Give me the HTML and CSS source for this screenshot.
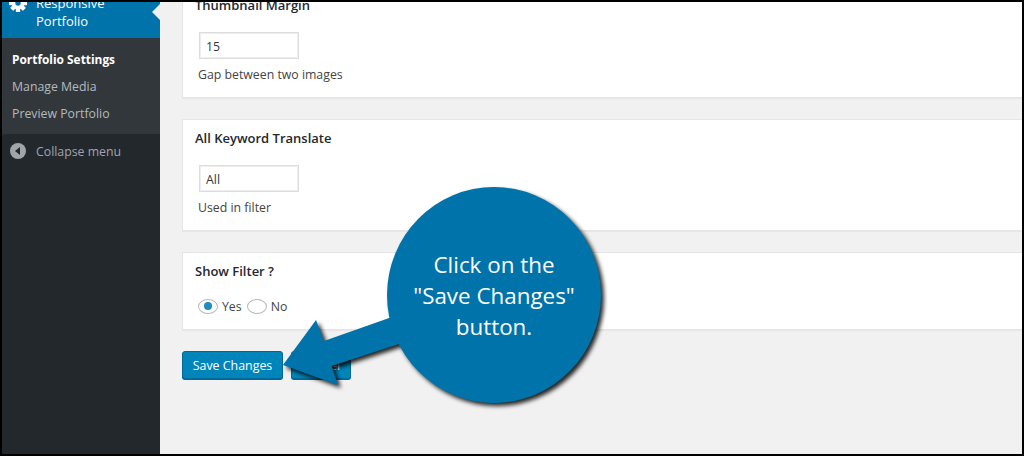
FILE: index.html
```html
<!DOCTYPE html>
<html lang="en">
<head>
  <meta charset="UTF-8">
  <meta name="viewport" content="width=device-width, initial-scale=1">
  <title>Responsive Portfolio</title>
  <link rel="stylesheet" href="styles.css">
</head>
<body>

<div class="frame">
  <aside class="sidebar">
    <div class="menu-current">
      <svg class="gear" viewBox="0 0 20 20">
        <g fill="#fff">
          <rect x="7.6" y="0" width="4.8" height="20" rx="0.6"/>
          <rect x="7.6" y="0" width="4.8" height="20" rx="0.6" transform="rotate(45 10 10)"/>
          <rect x="7.6" y="0" width="4.8" height="20" rx="0.6" transform="rotate(90 10 10)"/>
          <rect x="7.6" y="0" width="4.8" height="20" rx="0.6" transform="rotate(135 10 10)"/>
          <circle cx="10" cy="10" r="7"/>
        </g>
        <circle cx="10" cy="10" r="3" fill="#0073aa"/>
      </svg>
      <span class="menu-label">Responsive Portfolio</span>
      <span class="menu-notch"></span>
    </div>
    <ul class="submenu">
      <li class="active">Portfolio Settings</li>
      <li>Manage Media</li>
      <li>Preview Portfolio</li>
    </ul>
    <div class="collapse">
      <svg class="collapse-icon" viewBox="0 0 16 16">
        <circle cx="8" cy="8" r="8" fill="#a0a5aa"/>
        <path d="M5 8l5-4v8z" fill="#23282d"/>
      </svg>
      <span>Collapse menu</span>
    </div>
  </aside>

  <main class="main">
    <section class="card">
      <h3>Thumbnail Margin</h3>
      <div class="field">15</div>
      <p class="help">Gap between two images</p>
    </section>

    <section class="card">
      <h3>All Keyword Translate</h3>
      <div class="field">All</div>
      <p class="help">Used in filter</p>
    </section>

    <section class="card card-radio">
      <h3>Show Filter ?</h3>
      <div class="radios">
        <span class="radio checked"></span>
        <span class="radio-label">Yes</span>
        <span class="radio"></span>
        <span class="radio-label">No</span>
      </div>
    </section>

    <div class="actions">
      <button class="btn btn-save">Save Changes</button>
      <button class="btn btn-cancel">Cancel</button>
    </div>
  </main>

  <div class="callout">
    <svg class="callout-shape" viewBox="270 180 345 230">
      <path d="M283 365L316 320L324 341L392 317L402 343L331.500 366L338 385Z" fill="#0073aa"/>
      <ellipse cx="494" cy="295" rx="107" ry="108" fill="#0073aa"/>
    </svg>
    <div class="callout-text">Click on the<br>"Save Changes"<br>button.</div>
  </div>
</div>

</body>
</html>
```

FILE: styles.css
```css
html, body {
  margin: 0;
  padding: 0;
  height: 100%;
  background: #f1f1f1;
  font-family: 'Open Sans', 'Noto Sans', sans-serif;
  font-size: 12.3px;
  color: #444;
}
.frame {
  position: relative;
  display: flex;
  box-sizing: border-box;
  height: 456px;
  border: 2px solid #000;
  overflow: hidden;
}

/* left menu */
.sidebar {
  flex: 0 0 158px;
  background: #23282d;
  color: #eee;
}
.menu-current {
  position: relative;
  display: flex;
  gap: 9px;
  height: 52px;
  margin-top: -16px;
  padding: 0 10px 0 7px;
  box-sizing: border-box;
  background: #0073aa;
  color: #fff;
  line-height: 18px;
  font-size: 13px;
}
.gear {
  flex: 0 0 18px;
  height: 18px;
  margin-top: 8px;
}
.menu-label {
  padding-top: 8px;
  width: 90px;
}
.menu-notch {
  position: absolute;
  right: 0;
  top: 18px;
  border: 8px solid transparent;
  border-right-color: #f1f1f1;
}
.submenu {
  list-style: none;
  margin: 0;
  padding: 8px 0 7px;
  background: #32373c;
  color: #b4b9be;
}
.submenu li {
  height: 27px;
  padding-left: 10px;
  line-height: 27px;
}
.submenu li.active {
  color: #fff;
  font-size: 11.9px;
  font-weight: 700;
}
.collapse {
  display: flex;
  align-items: center;
  gap: 10px;
  height: 34px;
  padding-left: 8px;
  color: #a0a5aa;
}
.collapse-icon {
  width: 16px;
  height: 16px;
}

/* settings cards */
.main {
  flex: 1;
  min-width: 0;
  margin-top: -16px;
  padding-left: 22px;
}
.card {
  box-sizing: border-box;
  height: 112px;
  margin-bottom: 21px;
  padding: 9px 12px 0;
  background: #fff;
  border: 1px solid #e5e5e5;
  border-right: 0;
  box-shadow: 0 1px 1px rgba(0,0,0,.04);
}
.card-radio {
  height: 78px;
}
.card h3 {
  margin: 0 0 18px;
  font-size: 13px;
  font-weight: 600;
  line-height: 18px;
  color: #23282d;
}
.field {
  box-sizing: border-box;
  width: 100px;
  height: 27px;
  margin-left: 4px;
  padding-left: 6px;
  border: 1px solid #ddd;
  box-shadow: inset 0 0 0 1px #eee;
  line-height: 27px;
  color: #32373c;
}
.help {
  margin: 7px 0 0 3px;
  line-height: 18px;
}
.radios {
  display: flex;
  align-items: center;
  height: 16px;
  margin: 0 0 0 3px;
}
.radio {
  position: relative;
  box-sizing: border-box;
  width: 20px;
  height: 15px;
  border: 1px solid #b4b9be;
  border-radius: 50%;
  background: #fff;
}
.radio.checked::after {
  content: "";
  position: absolute;
  left: 5px;
  top: 2.500px;
  width: 8px;
  height: 8px;
  border-radius: 50%;
  background: #1e8cbe;
}
.radio-label {
  margin: 0 5px 0 4px;
}

/* buttons */
.actions {
  display: flex;
  gap: 8px;
}
.btn {
  height: 28px;
  padding: 0;
  border: 1px solid #006799;
  border-radius: 3px;
  background: #0085ba;
  box-shadow: 0 1px 0 #006799;
  color: #fff;
  font-family: inherit;
  font-size: 12.4px;
}
.btn-save {
  width: 101px;
}
.btn-cancel {
  width: 60px;
}

/* blue tutorial callout */
.callout {
  position: absolute;
  left: 268px;
  top: 178px;
  width: 345px;
  height: 230px;
}
.callout-shape {
  display: block;
  width: 345px;
  height: 230px;
  overflow: visible;
  filter: drop-shadow(3px 3px 2px rgba(0,0,0,.85));
}
.callout-text {
  position: absolute;
  left: 124px;
  top: 69px;
  width: 200px;
  text-align: center;
  font-size: 22.4px;
  line-height: 31px;
  color: #fff;
}
```
